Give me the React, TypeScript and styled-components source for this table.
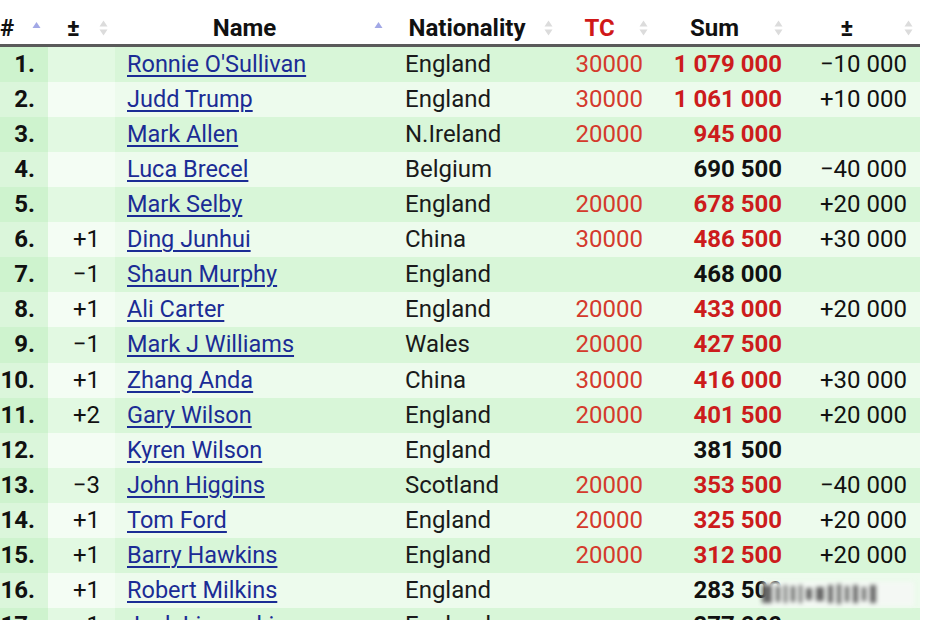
import * as React from "react";
import styled, { createGlobalStyle } from "styled-components";

const GlobalStyle = createGlobalStyle`
  html, body {
    margin: 0;
    padding: 0;
    background: #ffffff;
    overflow: hidden;
  }
  body {
    font-family: Roboto, "Noto Sans", sans-serif;
  }
`;

interface Player {
  change: string;
  name: string;
  nation: string;
  tc: string;
  sum: string;
  diff: string;
}

const players: Player[] = [
  { change: "", name: "Ronnie O'Sullivan", nation: "England", tc: "30000", sum: "1 079 000", diff: "−10 000" },
  { change: "", name: "Judd Trump", nation: "England", tc: "30000", sum: "1 061 000", diff: "+10 000" },
  { change: "", name: "Mark Allen", nation: "N.Ireland", tc: "20000", sum: "945 000", diff: "" },
  { change: "", name: "Luca Brecel", nation: "Belgium", tc: "", sum: "690 500", diff: "−40 000" },
  { change: "", name: "Mark Selby", nation: "England", tc: "20000", sum: "678 500", diff: "+20 000" },
  { change: "+1", name: "Ding Junhui", nation: "China", tc: "30000", sum: "486 500", diff: "+30 000" },
  { change: "−1", name: "Shaun Murphy", nation: "England", tc: "", sum: "468 000", diff: "" },
  { change: "+1", name: "Ali Carter", nation: "England", tc: "20000", sum: "433 000", diff: "+20 000" },
  { change: "−1", name: "Mark J Williams", nation: "Wales", tc: "20000", sum: "427 500", diff: "" },
  { change: "+1", name: "Zhang Anda", nation: "China", tc: "30000", sum: "416 000", diff: "+30 000" },
  { change: "+2", name: "Gary Wilson", nation: "England", tc: "20000", sum: "401 500", diff: "+20 000" },
  { change: "", name: "Kyren Wilson", nation: "England", tc: "", sum: "381 500", diff: "" },
  { change: "−3", name: "John Higgins", nation: "Scotland", tc: "20000", sum: "353 500", diff: "−40 000" },
  { change: "+1", name: "Tom Ford", nation: "England", tc: "20000", sum: "325 500", diff: "+20 000" },
  { change: "+1", name: "Barry Hawkins", nation: "England", tc: "20000", sum: "312 500", diff: "+20 000" },
  { change: "+1", name: "Robert Milkins", nation: "England", tc: "", sum: "283 500", diff: "" },
  { change: "−1", name: "Jack Lisowski", nation: "England", tc: "", sum: "277 000", diff: "" },
];

const Page = styled.div`
  position: relative;
  width: 930px;
  height: 620px;
  overflow: hidden;
  background: #ffffff;
`;

const Table = styled.table`
  width: 920px;
  border-collapse: collapse;
  table-layout: fixed;
  font-size: 24px;
  color: #111;
`;

const HeadRow = styled.tr`
  height: 45px;
  border-bottom: 3px solid #5a5a5a;
`;

const HeadCell = styled.th<{ $red?: boolean }>`
  padding: 12px 0 0 0;
  font-weight: 700;
  font-size: 24px;
  color: ${(p) => (p.$red ? "#d01818" : "#111")};
`;

const HeadInner = styled.div<{ $left?: boolean }>`
  display: flex;
  align-items: center;
  justify-content: space-between;
  padding-right: 7px;

  span {
    flex: ${(p) => (p.$left ? "0 0 auto" : "1")};
    text-align: ${(p) => (p.$left ? "left" : "center")};
  }
`;

const Row = styled.tr<{ $odd: boolean }>`
  height: 35.13px;
  background: ${(p) => (p.$odd ? "#d8f6d8" : "#edfbed")};
`;

const Cell = styled.td<{ $align?: string; $pad?: string; $bg?: string }>`
  padding: 0 ${(p) => p.$pad || "0"} 0 0;
  text-align: ${(p) => p.$align || "left"};
  white-space: nowrap;
  overflow: hidden;
  line-height: 35px;
  ${(p) => (p.$bg ? `background: ${p.$bg};` : "")}
`;

const Rank = styled(Cell)`
  font-weight: 700;
`;

const NameLink = styled.a`
  color: #1b2c95;
  font-size: 23.5px;
  text-decoration: underline;
  text-decoration-thickness: 2px;
  text-underline-offset: 3px;
  margin-left: 12px;
`;

const Nation = styled(Cell)`
  padding-left: 15px;
  color: #1a1a1a;
`;

const Tc = styled(Cell)`
  color: #d43a2c;
`;

const Sum = styled(Cell)<{ $red: boolean }>`
  font-weight: 700;
  color: ${(p) => (p.$red ? "#cc1c1c" : "#111")};
`;

const Watermark = styled.div`
  position: absolute;
  left: 762px;
  top: 582px;
  width: 152px;
  height: 24px;
  display: flex;
  gap: 4px;
  align-items: center;
  filter: blur(2px);
  background: #f4f8f4;
`;

const Smear = styled.i<{ $h: number; $w: number }>`
  display: block;
  width: ${(p) => p.$w}px;
  height: ${(p) => p.$h}px;
  background: #666;
`;

const smears = [
  [18, 10], [16, 4], [18, 3], [16, 4], [18, 3], [12, 6], [14, 8], [18, 5], [20, 4], [16, 4], [18, 5], [14, 4], [18, 6],
];

const SortUp = () => (
  <svg width="9" height="20" viewBox="0 0 9 20">
    <path d="M0.5 10 L4.5 4 L8.5 10 Z" fill="#a2a8e6" />
  </svg>
);

const SortBoth = () => (
  <svg width="9" height="20" viewBox="0 0 9 20">
    <path d="M0.5 8.5 L4.5 2.5 L8.5 8.5 Z" fill="#dcdcdc" />
    <path d="M0.5 11.5 L4.5 17.5 L8.5 11.5 Z" fill="#dcdcdc" />
  </svg>
);

const headers = [
  { label: "#", width: 48, up: true, left: true },
  { label: "±", width: 67, up: false },
  { label: "Name", width: 275, up: true },
  { label: "Nationality", width: 170, up: false },
  { label: "TC", width: 95, up: false, red: true },
  { label: "Sum", width: 135, up: false },
  { label: "±", width: 130, up: false },
];

export default function App() {
  return (
    <Page>
      <GlobalStyle />
      <Table>
        <colgroup>
          {headers.map((h, i) => (
            <col key={i} style={{ width: h.width }} />
          ))}
        </colgroup>
        <thead>
          <HeadRow>
            {headers.map((h, i) => (
              <HeadCell key={i} $red={h.red}>
                <HeadInner $left={h.left}>
                  <span>{h.label}</span>
                  {h.up ? <SortUp /> : <SortBoth />}
                </HeadInner>
              </HeadCell>
            ))}
          </HeadRow>
        </thead>
        <tbody>
          {players.map((p, i) => {
            const odd = i % 2 === 0;
            return (
              <Row key={i} $odd={odd}>
                <Rank $align="right" $pad="13px" $bg={odd ? "#cef3ce" : "#dbf6db"}>
                  {i + 1}.
                </Rank>
                <Cell $align="right" $pad="15px" $bg={odd ? "#e2f9e2" : "#f4fdf4"}>
                  {p.change}
                </Cell>
                <Cell>
                  <NameLink href="#">{p.name}</NameLink>
                </Cell>
                <Nation>{p.nation}</Nation>
                <Tc $align="right" $pad="12px">
                  {p.tc}
                </Tc>
                <Sum $align="right" $pad="8px" $red={p.tc !== ""}>
                  {p.sum}
                </Sum>
                <Cell $align="right" $pad="13px">
                  {p.diff}
                </Cell>
              </Row>
            );
          })}
        </tbody>
      </Table>
      <Watermark>
        {smears.map(([h, w], i) => (
          <Smear key={i} $h={h} $w={w} />
        ))}
      </Watermark>
    </Page>
  );
}
